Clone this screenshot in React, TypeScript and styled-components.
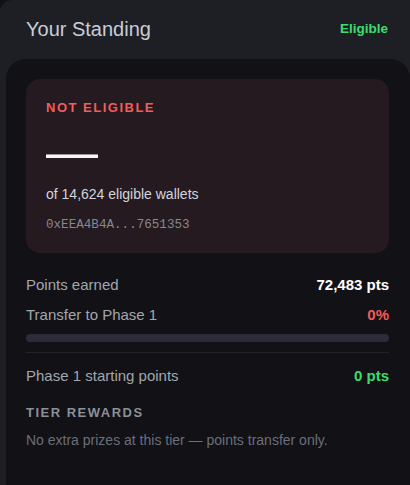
import styled, { createGlobalStyle } from 'styled-components';
import React from 'react';

const GlobalStyle = createGlobalStyle`
  html, body {
    margin: 0;
    padding: 0;
    background: #111116;
    overflow: hidden;
  }
  body {
    font-family: "Liberation Sans", Arial, sans-serif;
  }
`;

const Panel = styled.section`
  width: 416px;
  height: 485px;
  background: #1e1f25;
  border-top-left-radius: 12px;
  padding: 0 6px;
  box-sizing: border-box;
  display: flex;
  flex-direction: column;
`;

const Header = styled.header`
  display: flex;
  align-items: center;
  justify-content: space-between;
  height: 59px;
  padding: 0 22px 0 20px;
  box-sizing: border-box;
`;

const Title = styled.h2`
  margin: 0;
  font-size: 20px;
  font-weight: 400;
  color: #c9cdd6;
`;

const StatusTag = styled.span`
  font-size: 13.5px;
  font-weight: 700;
  color: #3ddc6e;
  margin-bottom: 3px;
`;

const Body = styled.div`
  flex: 1;
  background: #111116;
  border-radius: 20px 20px 0 0;
  padding: 20px 21px 0 20px;
`;

const RankCard = styled.div`
  background: #241a1f;
  border-radius: 14px;
  padding: 21px 20px 21px;
  display: flex;
  flex-direction: column;
`;

const Label = styled.div<{ $tone?: string }>`
  font-size: 13px;
  font-weight: 700;
  letter-spacing: 1.5px;
  text-transform: uppercase;
  color: ${(p) => p.$tone || '#8c9098'};
`;

const Rank = styled.div`
  font-size: 52px;
  font-weight: 400;
  line-height: 1;
  color: #f6f6f6;
  margin-top: 10px;
  height: 48px;
`;

const Wallets = styled.div`
  font-size: 14px;
  color: #d3d6dd;
  margin-top: 13px;
`;

const Address = styled.div`
  font-family: "Liberation Mono", "DejaVu Sans Mono", monospace;
  font-size: 12.6px;
  color: #858890;
  margin-top: 16px;
`;

const Stats = styled.div`
  display: flex;
  flex-direction: column;
  padding-top: 16px;
`;

const Row = styled.div`
  display: flex;
  justify-content: space-between;
  align-items: center;
  height: 30px;
  font-size: 15px;
`;

const RowLabel = styled.span`
  color: #a3a6ae;
`;

const RowValue = styled.span<{ $tone: string }>`
  font-weight: 700;
  color: ${(p) => p.$tone};
`;

const Track = styled.div`
  height: 8px;
  border-radius: 4px;
  background: #2b2c38;
  margin-top: 5px;
  overflow: hidden;
`;

const Fill = styled.div`
  height: 100%;
  background: #f05a5a;
`;

const Divider = styled.hr`
  border: none;
  border-top: 1px solid #22232a;
  margin: 10px 0 7px;
`;

const Rewards = styled.div`
  margin-top: 15px;
  display: flex;
  flex-direction: column;
  gap: 12px;
`;

const RewardsText = styled.p`
  margin: 0;
  font-size: 14px;
  color: #6b6f78;
`;

export default function App() {
  const transfer = 0;
  return (
    <>
      <GlobalStyle />
      <Panel>
        <Header>
          <Title>Your Standing</Title>
          <StatusTag>Eligible</StatusTag>
        </Header>
        <Body>
          <RankCard>
            <Label $tone="#f25c5c">Not Eligible</Label>
            <Rank>—</Rank>
            <Wallets>of 14,624 eligible wallets</Wallets>
            <Address>0xEEA4B4A...7651353</Address>
          </RankCard>
          <Stats>
            <Row>
              <RowLabel>Points earned</RowLabel>
              <RowValue $tone="#ffffff">72,483 pts</RowValue>
            </Row>
            <Row>
              <RowLabel>Transfer to Phase 1</RowLabel>
              <RowValue $tone="#f25c5c">{transfer}%</RowValue>
            </Row>
            <Track>
              <Fill style={{ width: `${transfer}%` }} />
            </Track>
            <Divider />
            <Row>
              <RowLabel>Phase 1 starting points</RowLabel>
              <RowValue $tone="#3ddc6e">0 pts</RowValue>
            </Row>
          </Stats>
          <Rewards>
            <Label>Tier Rewards</Label>
            <RewardsText>No extra prizes at this tier — points transfer only.</RewardsText>
          </Rewards>
        </Body>
      </Panel>
    </>
  );
}
